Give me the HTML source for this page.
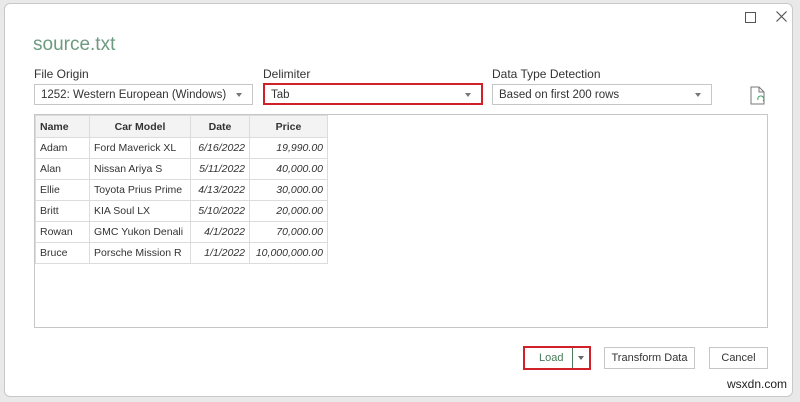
<!DOCTYPE html><html><head><style>
body{margin:0;width:800px;height:402px;background:#e9e9e9;font-family:"Liberation Sans",sans-serif;position:relative;overflow:hidden}
.dlg{position:absolute;left:4px;top:3px;width:787px;height:392px;background:#fff;border:1px solid #c8c8c8;border-radius:6px}
.a{position:absolute}
.lbl{font-size:12px;color:#333}
.dd{position:absolute;border:1px solid #c6c6c6;font-size:11.5px;color:#333;line-height:20px;padding-left:6px;box-sizing:border-box;height:21px}
.dd:after{content:"";position:absolute;right:10px;top:8px;border:3px solid transparent;border-top:4px solid #777}
table{border-collapse:collapse;font-size:10.5px;color:#333;table-layout:fixed;width:292px}
td{border:1px solid #dcdcdc;height:20px;padding:0 4px;white-space:nowrap;overflow:hidden}
th{border:1px solid #dcdcdc;height:19px;font-weight:bold;background:#f3f3f3;font-size:10.5px}
.i{font-style:italic;text-align:right}
.btn{position:absolute;height:22px;border:1px solid #c6c6c6;font-size:11px;line-height:20px;text-align:center;color:#333;box-sizing:border-box}
</style></head><body>
<div class="dlg"></div>
<div class="a" style="left:745px;top:12px;width:9px;height:9px;border:1px solid #555"></div>
<svg class="a" style="left:776px;top:11px" width="11" height="11"><path d="M0.5 0.5L10.5 10.5M10.5 0.5L0.5 10.5" stroke="#555" stroke-width="1.2"/></svg>
<div class="a" style="left:33px;top:34px;font-size:19px;color:#6e9a80">source.txt</div>
<div class="a lbl" style="left:34px;top:67px">File Origin</div>
<div class="a lbl" style="left:263px;top:67px">Delimiter</div>
<div class="a lbl" style="left:492px;top:67px">Data Type Detection</div>
<div class="dd" style="left:34px;top:84px;width:219px">1252: Western European (Windows)</div>
<div class="dd" style="left:263px;top:83px;width:220px;border:2px solid #d0202a;height:22px">Tab</div>
<div class="dd" style="left:492px;top:84px;width:220px">Based on first 200 rows</div>
<svg class="a" style="left:750px;top:86px" width="16" height="19"><path d="M1 1h8l5 5v12H1z" fill="none" stroke="#777"/><path d="M9 1v5h5" fill="none" stroke="#777"/><path d="M8 14a3 3 0 1 1 5 1" fill="none" stroke="#3a9a5a"/></svg>
<div class="a" style="left:34px;top:114px;width:732px;height:212px;border:1px solid #c6c6c6"></div>
<table class="a" style="left:35px;top:115px">
<colgroup><col style="width:54px"><col style="width:101px"><col style="width:59px"><col style="width:78px"></colgroup>
<tr><th style="text-align:left;padding-left:4px">Name</th><th>Car Model</th><th>Date</th><th>Price</th></tr>
<tr><td>Adam</td><td>Ford Maverick XL</td><td class="i">6/16/2022</td><td class="i">19,990.00</td></tr>
<tr><td>Alan</td><td>Nissan Ariya S</td><td class="i">5/11/2022</td><td class="i">40,000.00</td></tr>
<tr><td>Ellie</td><td>Toyota Prius Prime</td><td class="i">4/13/2022</td><td class="i">30,000.00</td></tr>
<tr><td>Britt</td><td>KIA Soul LX</td><td class="i">5/10/2022</td><td class="i">20,000.00</td></tr>
<tr><td>Rowan</td><td>GMC Yukon Denali</td><td class="i">4/1/2022</td><td class="i">70,000.00</td></tr>
<tr><td>Bruce</td><td>Porsche Mission R</td><td class="i">1/1/2022</td><td class="i">10,000,000.00</td></tr>
</table>
<div class="btn" style="left:523px;top:346px;width:68px;height:24px;border:2px solid #d0202a;text-align:left;padding-left:14px;color:#4a7a5a">Load</div>
<div class="a" style="left:572px;top:348px;width:1px;height:20px;background:#4a7a5a"></div>
<div class="a" style="left:578px;top:356px;border:3px solid transparent;border-top:4px solid #666"></div>
<div class="btn" style="left:604px;top:347px;width:91px">Transform Data</div>
<div class="btn" style="left:709px;top:347px;width:59px">Cancel</div>
<div class="a" style="left:727px;top:377px;font-size:12px;color:#222">wsxdn.com</div>
</body></html>
